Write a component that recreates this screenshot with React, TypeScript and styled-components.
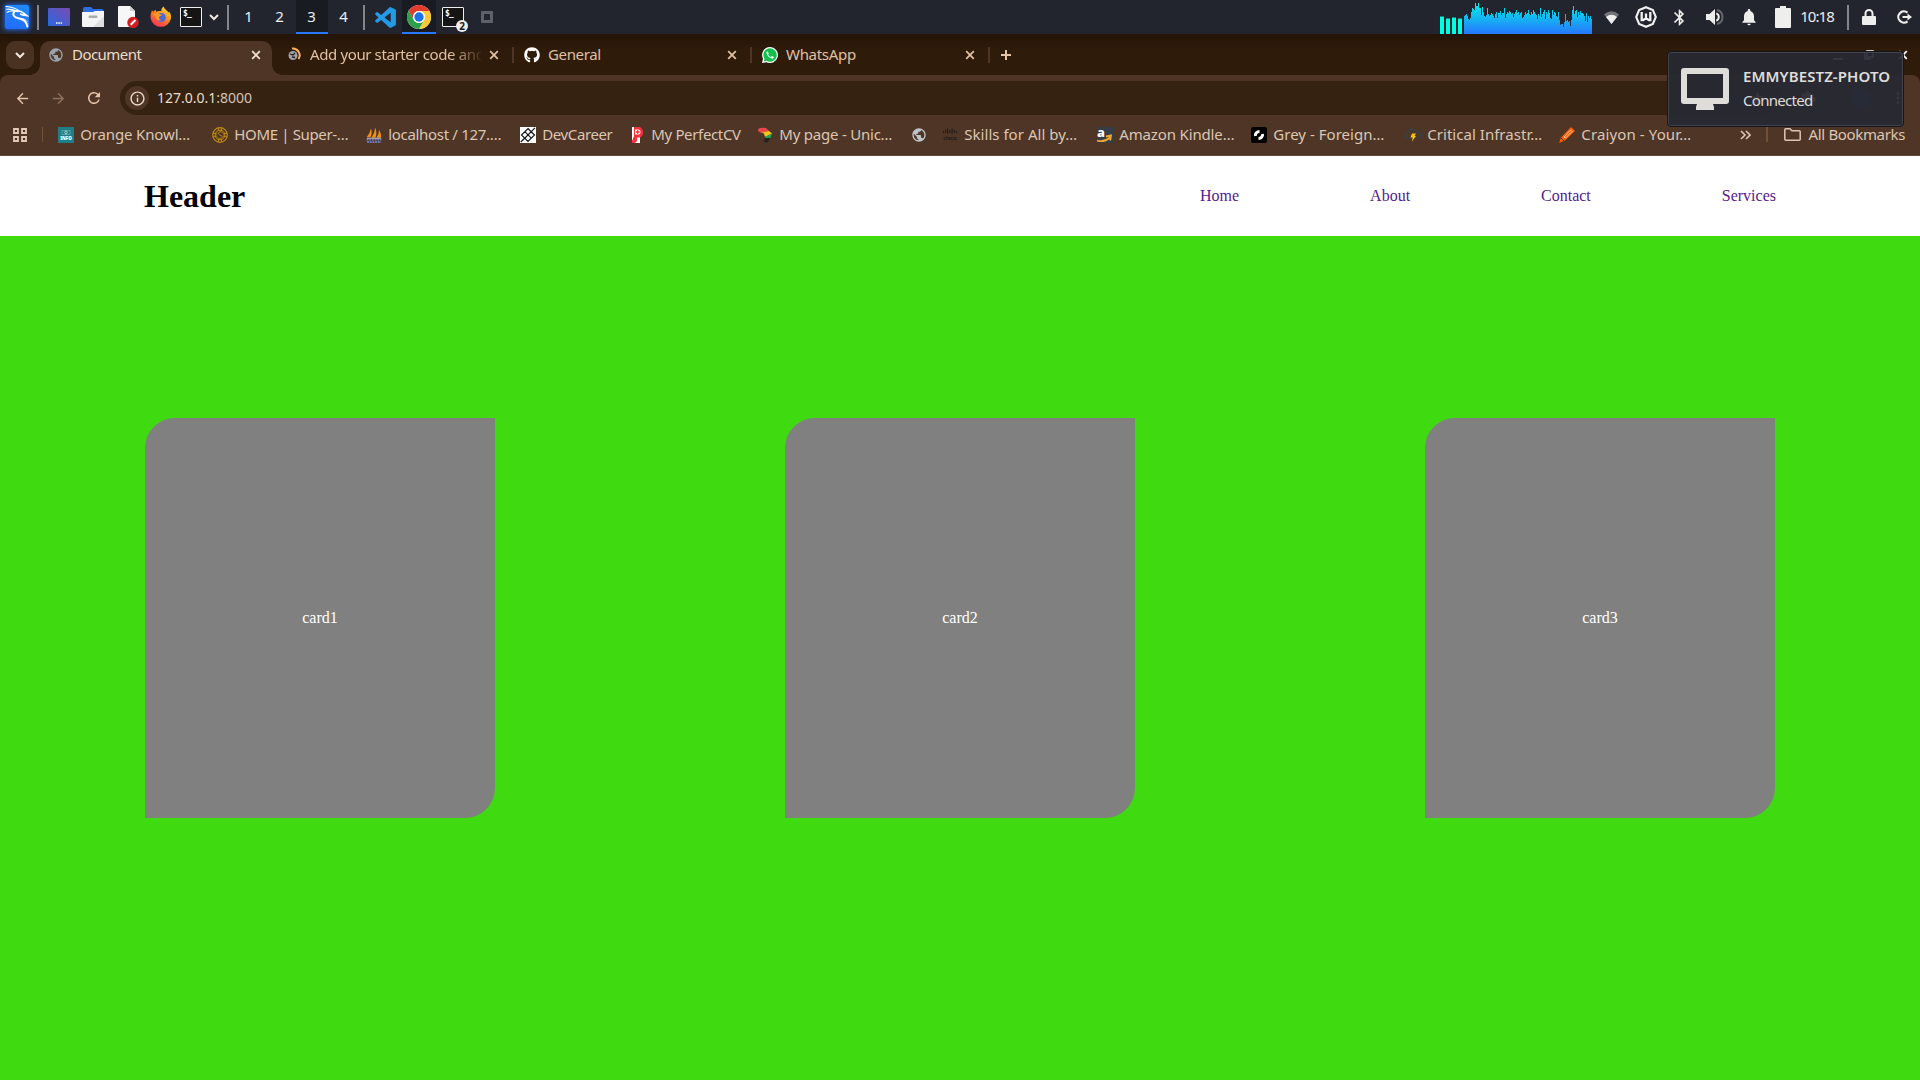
import React from "react";
import styled, { createGlobalStyle, css } from "styled-components";
import { FaGithub } from "react-icons/fa";
import { BiLogoVisualStudio } from "react-icons/bi";
import {
  MdArrowBack, MdArrowForward, MdRefresh, MdBluetooth, MdNotifications,
  MdExtension, MdStar, MdMoreVert, MdOutlineInfo, MdPublic,
} from "react-icons/md";

const ui = `"Noto Sans", "Open Sans", sans-serif`;
const serif = `"Liberation Serif", "Times New Roman", serif`;

const GlobalStyle = createGlobalStyle`
  html, body { margin: 0; padding: 0; }
  body { width: 1920px; height: 1080px; overflow: hidden; background: #40da10; }
  * { box-sizing: border-box; }
  svg { display: block; flex: none; }
`;

const Screen = styled.div`
  position: relative;
  display: flex;
  flex-direction: column;
  width: 1920px;
  height: 1080px;
  overflow: hidden;
`;

/* ---------- desktop panel ---------- */
const Panel = styled.header`
  display: flex;
  justify-content: space-between;
  height: 34px;
  flex: none;
  background: #23252e;
  font: 15px ${ui};
  color: #eeeeec;
`;
const PanelSide = styled.div`
  display: flex;
  align-items: center;
  height: 34px;
`;
const Slot = styled.div<{ $w: number; $active?: boolean }>`
  position: relative;
  display: flex;
  align-items: center;
  justify-content: center;
  flex: none;
  width: ${(p) => p.$w}px;
  height: 34px;
  line-height: 34px;
  ${(p) => p.$active && css`
    background: #191b22;
    box-shadow: inset 0 -2px #2777ff;
  `}
`;
const EndSlot = styled(Slot)`
  justify-content: flex-end;
  padding-right: 8px;
`;
const Workspace = styled.span`
  padding-right: 1px;
  line-height: 32px;
  height: 34px;
`;
const PanelRule = styled.span`
  width: 2px;
  height: 25px;
  background: #85868a;
`;
const KaliTile = styled.div`
  display: grid;
  place-items: center;
  width: 24px;
  height: 24px;
  border-radius: 2px;
  background: linear-gradient(20deg, #2369ff, #1f8dff);
  box-shadow: 0 0 4px 1px #2262d0;
`;
const Terminal = styled.div`
  width: 22px;
  height: 20px;
  border: 1px solid #eeeeec;
  border-radius: 1px;
  background: #151515;
  color: #fff;
  font: bold 8px/10px "DejaVu Sans Mono", monospace;
  letter-spacing: -0.8px;
  padding: 1px 2px;
`;
const CountBadge = styled.span`
  position: absolute;
  right: 2px;
  bottom: 2px;
  width: 12px;
  height: 12px;
  border-radius: 50%;
  background: #eeeeec;
  color: #191b22;
  font: bold 10px/12px ${ui};
  text-align: center;
`;
const TrayWindow = styled.span`
  width: 12px;
  height: 12px;
  border: 3px solid #5e606b;
  border-radius: 1px;
`;
const CpuBars = styled.div`
  display: flex;
  align-items: flex-end;
  gap: 2px;
  align-self: flex-end;
  margin-right: 2px;
`;
const CpuBar = styled.i<{ $h: number }>`
  width: 4px;
  height: ${(p) => p.$h}px;
  background: #00ffe0;
  box-shadow: 0 -1px #17847d;
`;
const Clock = styled.span`
  font-size: 15px;
  line-height: 32px;
  height: 34px;
  padding-right: 2px;
  letter-spacing: -0.95px;
  white-space: nowrap;
`;

/* ---------- browser chrome ---------- */
const TabStrip = styled.div`
  display: flex;
  height: 41px;
  flex: none;
  padding: 7px 0 0 6px;
  background: linear-gradient(#241407, #2e1b0a 16px);
  font: 15px ${ui};
`;
const TabSearch = styled.div`
  display: grid;
  place-items: center;
  width: 28px;
  height: 28px;
  border-radius: 9px;
  background: #4a3223;
`;
const Tab = styled.div<{ $active?: boolean }>`
  position: relative;
  display: flex;
  align-items: center;
  width: 238px;
  height: 34px;
  padding: 0 12px 6px 8px;
  color: ${(p) => (p.$active ? "#ecdccb" : "#e0c0a2")};
  ${(p) => p.$active && css`
    width: 232px;
    margin: 0 6px 0 6px;
    padding-right: 8px;
    border-radius: 10px 10px 0 0;
    background: #4e3526;
    &::before, &::after {
      content: "";
      position: absolute;
      bottom: 0;
      width: 10px;
      height: 10px;
    }
    &::before { left: -10px; background: radial-gradient(circle at 0 0, transparent 9.5px, #4e3526 10px); }
    &::after { right: -10px; background: radial-gradient(circle at 100% 0, transparent 9.5px, #4e3526 10px); }
  `}
`;
const TabLabel = styled.span<{ $track: number; $fade?: boolean }>`
  flex: 1;
  margin-left: 8px;
  margin-right: ${(p) => (p.$fade ? 5 : 7)}px;
  overflow: hidden;
  white-space: nowrap;
  line-height: 26px;
  padding-bottom: 2px;
  letter-spacing: ${(p) => p.$track}px;
  ${(p) => p.$fade && css`
    mask-image: linear-gradient(90deg, #000 82%, transparent 102%);
  `}
`;
const TabRule = styled.i`
  width: 2px;
  height: 16px;
  margin: 0 -10px 0 10px;
  background: #4e3526;
`;
const NewTab = styled.div`
  display: grid;
  place-items: center;
  width: 28px;
  height: 28px;
`;
const WindowButtons = styled.div`
  display: flex;
  align-items: center;
  gap: 21px;
  height: 28px;
  margin: 0 9px 0 auto;
`;

const ToolbarBack = styled.div`
  flex: none;
  background: #2e1b0a;
`;
const Toolbar = styled.div`
  display: flex;
  align-items: center;
  height: 46px;
  flex: none;
  background: #4e3526;
  border-radius: 8px 8px 0 0;
  color: #e6c4a8;
`;
const ToolButton = styled.div<{ $w: number; $dim?: boolean }>`
  display: grid;
  place-items: center;
  width: ${(p) => p.$w}px;
  opacity: ${(p) => (p.$dim ? 0.42 : 1)};
`;
const Omnibox = styled.div`
  display: flex;
  align-items: center;
  width: 1662px;
  height: 34px;
  margin-left: 4px;
  padding: 0 16px 0 5px;
  border-radius: 17px;
  background: #352210;
  color: #d5c4b5;
  font: 14px ${ui};
  > svg { margin-left: auto; }
`;
const SiteInfo = styled.span`
  display: grid;
  place-items: center;
  width: 24px;
  height: 24px;
  margin-right: 8px;
  border-radius: 50%;
  background: #4e3526;
  color: #ecdccb;
`;
const Address = styled.span`
  padding-bottom: 2px;
`;
const Host = styled.span`
  color: #ecdccb;
`;
const Avatar = styled.span`
  width: 20px;
  height: 20px;
  border-radius: 50%;
  background: #24466e;
`;

const Bookmarks = styled.nav`
  display: flex;
  align-items: center;
  height: 35px;
  flex: none;
  padding: 0 15px 7px 13px;
  background: #4e3526;
  border-bottom: 1px solid #5f4a3d;
  color: #dcc6b4;
  font: 15px ${ui};
`;
const BarRule = styled.i<{ $l: number; $r: number }>`
  width: 2px;
  height: 15px;
  margin: 0 ${(p) => p.$r}px 0 ${(p) => p.$l}px;
  background: #715039;
`;
const Bookmark = styled.a<{ $w: number }>`
  display: flex;
  align-items: center;
  gap: 6px;
  flex: none;
  width: ${(p) => p.$w}px;
`;
const BookmarkLabel = styled.span<{ $track: number }>`
  padding-bottom: 2px;
  white-space: nowrap;
  line-height: 20px;
  letter-spacing: ${(p) => p.$track}px;
`;
const Overflow = styled.span`
  margin-left: 27px;
`;
const AllBookmarks = styled.span`
  display: flex;
  align-items: center;
  gap: 8px;
`;

/* ---------- web page ---------- */
const PageHeader = styled.div`
  display: flex;
  align-items: center;
  justify-content: space-between;
  height: 80px;
  flex: none;
  padding: 0 144px;
  background: #fff;
  font: 16px ${serif};
`;
const Title = styled.h1`
  margin: 0;
  font-size: 32px;
  color: #000;
`;
const Menu = styled.nav`
  display: flex;
  justify-content: space-between;
  width: 576px;
`;
const MenuLink = styled.a`
  color: #551a8b;
`;
const Cards = styled.main`
  display: flex;
  flex: 1;
  justify-content: space-between;
  align-items: flex-start;
  padding: 182px 145px 0;
  background: #40da10;
`;
const Card = styled.section`
  display: flex;
  align-items: center;
  justify-content: center;
  width: 350px;
  height: 400px;
  border-radius: 30px 0;
  background: #808080;
  color: #fff;
  font: 16px ${serif};
`;

/* ---------- notification ---------- */
const Toast = styled.aside`
  position: absolute;
  top: 51px;
  left: 1667px;
  display: flex;
  align-items: center;
  gap: 14px;
  width: 237px;
  height: 76px;
  padding-left: 13px;
  border: 1px solid #15161c;
  border-radius: 4px;
  box-shadow: inset 0 0 0 1px #41434d;
  background: rgba(39, 41, 51, 0.93);
  color: #deddda;
  font: 15px/24px ${ui};
  white-space: nowrap;
`;
const ToastText = styled.div`
  padding-bottom: 2px;
`;
const ToastTitle = styled.div`
  font-weight: 600;
  letter-spacing: 0.1px;
`;
const ToastBody = styled.div`
  letter-spacing: -0.7px;
`;

const Cross = ({ color = "#e0c0a2" }) => (
  <svg width="16" height="16" viewBox="0 0 16 16" stroke={color} strokeWidth="1.8">
    <path d="M4.2 4.2l7.6 7.6M11.8 4.2l-7.6 7.6" />
  </svg>
);
const Chevron = ({ w = 10 }) => (
  <svg width={w} height={w} viewBox="0 0 10 10" fill="none" stroke="#f0e8e0" strokeWidth="2">
    <path d="M1 3l4 4 4-4" />
  </svg>
);
const KaliDragon = () => (
  <svg width="24" height="24" viewBox="0 0 24 24" fill="none" stroke="#fff" strokeLinecap="round">
    <path d="M1 1.500C6 1.700 11 3.200 15 6.500M1.500 4.200C6 3.800 10 5 13 6.700M2 7.300C5 5.800 7 5.800 9.500 6.300" strokeWidth="1.100" />
    <path d="M9.500 6.300C13 5.600 16.500 6.300 19 8.300L21.800 10.600 17.500 9.900 15.500 9" strokeWidth="1.600" />
    <path d="M9.500 6.300C6.800 9.500 9 12.600 13.500 13.200C18.500 14 21.500 16.300 22.400 21.500" strokeWidth="1.900" />
    <path d="M14.500 13.500C18.500 13.300 20.500 14.500 22 16.500" strokeWidth="1" />
  </svg>
);
const ChromeLogo = () => (
  <svg width="24" height="24" viewBox="0 0 48 48">
    <circle cx="24" cy="24" r="24" fill="#fff" />
    <path d="M3.2 12A24 24 0 0 1 44.8 12H24A12 12 0 0 0 13.6 30z" fill="#e33b2e" />
    <path d="M44.8 12A24 24 0 0 1 24 48L34.4 30A12 12 0 0 0 24 12z" fill="#fcc934" />
    <path d="M24 48A24 24 0 0 1 3.2 12L13.6 30A12 12 0 0 0 34.4 30z" fill="#2da04b" />
    <circle cx="24" cy="24" r="12" fill="#fff" />
    <circle cx="24" cy="24" r="9.3" fill="#1a73e8" />
  </svg>
);
const Firefox = () => (
  <svg width="22" height="22" viewBox="0 0 22 22">
    <defs>
      <linearGradient id="fox" x1=".8" y1="0" x2=".2" y2="1">
        <stop offset="0" stopColor="#ffe22e" /><stop offset=".45" stopColor="#ff8a20" /><stop offset="1" stopColor="#f5265f" />
      </linearGradient>
    </defs>
    <path d="M2 4.5l1.5 1.3 2-2.3.6 2.2c2-.8 4-.8 5.2-.5C11 3 12.500 1.200 13.800.5c.2 2.500 3.700 4 4.700 6l.6-1c2 2.500 2.300 5 1.700 7.500A10.300 10.300 0 0 1 .8 13C.2 10 .8 7 2 4.500z" fill="url(#fox)" />
    <circle cx="11.200" cy="11.500" r="4.600" fill="#4a66d8" />
    <path d="M3.500 8c2-1.500 5-1 6 .2l2.500.3c-.5 1.500-2.500 1.500-3 2.500-.2 2 1 3 2.500 3-3 1.500-6-.5-6-3.500z" fill="#ff9a22" />
  </svg>
);
const Desktop = () => (
  <svg width="22" height="18" viewBox="0 0 22 18">
    <defs><linearGradient id="dsk" x1="0" y1="1" x2="1" y2="0"><stop offset=".1" stopColor="#2f66dc" /><stop offset="1" stopColor="#7b4bb0" /></linearGradient></defs>
    <rect width="22" height="18" rx="1" fill="url(#dsk)" />
    <path d="M8 15h1.500M10.300 15h1.500M12.600 15h1.500" stroke="#fff" strokeWidth="1.500" />
  </svg>
);
const Files = () => (
  <svg width="22" height="20" viewBox="0 0 22 20">
    <path d="M1 1.500Q1 0 2.500 0H9l2 2h9q1.500 0 1.500 1.500V8H1z" fill="#2d6de0" />
    <path d="M0 5h11l2-1h9v15q0 1-1 1H1q-1 0-1-1z" fill="#f4f4f4" />
    <path d="M22 9v10q0 1-1 1H11z" fill="#dedede" />
    <rect x="6.500" y="8.500" width="9" height="2.400" rx="1.200" fill="#aaa" />
  </svg>
);
const Editor = () => (
  <svg width="21" height="22" viewBox="0 0 21 22">
    <path d="M1 0h11l5 5v16H1q-1 0-1-1V1q0-1 1-1z" fill="#f7f7f7" />
    <path d="M12 0l5 5h-5z" fill="#cfcfcf" />
    <circle cx="15" cy="16.500" r="5.700" fill="#d01e22" />
    <path d="M12.700 18.800l4.800-4.800" stroke="#fff" strokeWidth="2" />
  </svg>
);
const Wifi = () => (
  <svg width="15" height="13" viewBox="0 0 15 13">
    <path d="M0 3.500Q7.500-3 15 3.500L7.500 13z" fill="#73747a" />
    <path d="M2 6Q7.500 1.500 13 6L7.500 13z" fill="#eeeeec" />
  </svg>
);
const WBadge = () => (
  <svg width="22" height="22" viewBox="0 0 22 22" fill="none" stroke="#f2f2f2">
    <path d="M11 1.200l6.900 2.900 2.900 6.900-2.900 6.900L11 20.800l-6.900-2.900L1.200 11l2.900-6.900z" strokeWidth="2.100" />
    <path d="M6.700 6v8.200h1.500L11 12l2.800 2.200h1.500V6M11 7.500V12" strokeWidth="2.300" />
  </svg>
);
const Volume = () => (
  <svg width="18" height="16" viewBox="0 0 18 16" fill="none">
    <path d="M0 5h3.500L9 0v16l-5.500-5H0z" fill="#eeeeec" />
    <path d="M10.300 4.300a4 4 0 0 1 0 7.400" stroke="#eeeeec" strokeWidth="2" />
    <path d="M11 1a7.200 7.200 0 0 1 0 14" stroke="#66676e" strokeWidth="2" />
  </svg>
);
const Battery = () => (
  <svg width="16" height="22" viewBox="0 0 16 22" fill="#eeeeec">
    <path d="M5 0h6v2h4q1 0 1 1v18q0 1-1 1H1q-1 0-1-1V3q0-1 1-1h4z" />
  </svg>
);
const Lock = () => (
  <svg width="14" height="16" viewBox="0 0 14 16">
    <path d="M3.500 8V4.500a3.500 3.500 0 0 1 7 0V8" fill="none" stroke="#eeeeec" strokeWidth="2" />
    <rect y="7" width="14" height="9" rx="1" fill="#eeeeec" />
  </svg>
);
const Logout = () => (
  <svg width="15" height="14" viewBox="0 0 15 14" fill="none" stroke="#eeeeec" strokeWidth="2.200">
    <path d="M10.500 2.700A5.600 5.600 0 1 0 10.500 11.300M5.500 7h7" />
    <path d="M10.500 3.500L15 7l-4.500 3.500z" fill="#eeeeec" stroke="none" />
  </svg>
);
const Monitor = () => (
  <svg width="48" height="42" viewBox="0 0 48 42" fill="#deddda">
    <path fillRule="evenodd" d="M3 0h42q3 0 3 3v30q0 3-3 3H32l1 3v3H15v-3l1-3H3q-3 0-3-3V3q0-3 3-3zM6 6v24h36V6z" />
  </svg>
);
const Folder = () => (
  <svg width="17" height="13" viewBox="0 0 17 13" fill="none" stroke="#dcc6b4" strokeWidth="1.500">
    <path d="M.8 1.800q0-1 1-1H6l1.800 1.900h7.400q1 0 1 1v7.500q0 1-1 1H1.800q-1 0-1-1z" />
  </svg>
);

const graph = [
  18, 19, 20, 18, 15, 14, 16, 22, 26, 25, 24, 31, 28, 28, 31, 26, 26, 19, 27, 22, 18, 17, 19, 26, 20, 18, 19, 21,
  20, 18, 16, 20, 22, 16, 21, 21, 23, 19, 21, 21, 26, 16, 20, 22, 21, 23, 22, 20, 21, 17, 20, 22, 24, 21, 22, 19,
  21, 22, 16, 17, 19, 22, 20, 21, 24, 20, 19, 22, 20, 24, 22, 20, 19, 15, 20, 18, 26, 17, 20, 22, 24, 15, 22,
  20, 24, 21, 16, 15, 24, 19, 22, 21, 18, 17, 22, 14, 9, 10, 10, 7, 12, 20, 13, 14, 12, 13, 8, 14, 24, 28, 20, 23,
  24, 17, 22, 19, 23, 21, 21, 20, 18, 13, 21, 12, 18, 16, 18, 15,
];
const NetGraph = () => (
  <svg width="128" height="34" viewBox="0 0 128 34" shapeRendering="crispEdges">
    <defs><linearGradient id="net" gradientUnits="userSpaceOnUse" x1="0" y1="2" x2="0" y2="34"><stop offset="0" stopColor="#00f4e4" /><stop offset="1" stopColor="#2777ff" /></linearGradient></defs>
    <path fill="url(#net)" d={graph.map((h, i) => `M${i} 34v${-h}h1v${h}z`).join("")} />
  </svg>
);

const Favicon = ({ kind }: { kind: string }) => {
  if (kind === "globe") return <MdPublic size={16} color="#bfc4cb" />;
  return (
    <svg width="16" height="16" viewBox="0 0 16 16" fill="none">
      {kind === "info" && <><path fill="#217d86" d="M0 0h16v16H0z" /><path d="M4 3.500h8v4H4z" stroke="#5fa9ad" strokeWidth=".8" /><circle cx="8" cy="5.500" r="1.300" stroke="#d6f1f0" strokeWidth=".7" /><text x="8" y="13" textAnchor="middle" fontFamily="Noto Sans" fontWeight="900" fontSize="4.500" fill="#fff">INFO</text></>}
      {kind === "seal" && <g stroke="#be8b0c"><circle cx="8" cy="8" r="7.300" strokeWidth="1.200" /><circle cx="8" cy="8" r="4.800" /><path d="M10.500 5.500C8 3.500 5 6 7 7.500s4 1 3 3-4 1-4.500 0M1 6l4 1M1 10l4-1M15 6l-4 1M15 10l-4-1M6 1l1 3M10 1L9 4M6 15l1-3M10 15l-1-3" /></g>}
      {kind === "boat" && <><path d="M5 1.500Q6.500 6 4.500 10H.8Q4 6.500 5 1.500zM9.300.5Q11.300 6 9.500 10.500H5.500Q8.800 6 9.300.5zM13 2.500Q15.500 7 15 10.500H10.500Q13.300 7 13 2.500z" fill="#f29111" /><path d="M.5 12.500h15M1 15h14" stroke="#6c78af" strokeWidth="2" strokeDasharray="2 .7" /><path d="M1 11.200h14" stroke="#e8e4e8" strokeWidth=".8" /></>}
      {kind === "dev" && <><path fill="#fff" d="M0 0h16v16H0z" /><path d="M8 1.500L14.500 8 8 14.500 1.500 8zM5 11l6.200-6.300M5 4.800l6.300 6.300M15 .8L11.500 4.300M.8 15l3.500-3.500" stroke="#15171a" strokeWidth="1.200" /></>}
      {kind === "cv" && <><path fill="#fff" d="M3 0h8v16H3z" /><path d="M4.500 0H11q3 2 3 5.500T11 10.500H8V14l-2 2H3V14L5 9V0z" fill="#f2333b" /><path d="M6 2.500h3.500q2 0 2 2.500T9.500 7.500H6z" fill="#fff" /><path d="M8.700 3.200v3.600M6.900 5H10.500" stroke="#f2333b" strokeWidth="1.400" /></>}
      {kind === "africa" && <><path d="M1 2Q4 0 9 1l3 3-8 2-3-2z" fill="#e8484a" /><path d="M4 5.800L12 4l3 2.500L8 10l-1-3.500z" fill="#f6c51b" /><path d="M8 9.800L15 6.800l-1.500 4-4 1z" fill="#1ea65a" /><path d="M7.500 11.500l5-.8v2L9.500 16 7 14.500z" fill="#25221d" /></>}
      {kind === "cisco" && <><path d="M1.500 4v2M3.600 2.500V6M5.700 1.500V7M7.900 3v3M10.100 1.500V7M12.300 2.500V6M14.500 4v2" stroke="#201b17" /><text x="8" y="12.800" textAnchor="middle" fontFamily="Noto Sans" fontWeight="700" fontSize="5.500" fill="#201b17">cisco</text></>}
      {kind === "kindle" && <><path fill="#333e48" d="M0 0h16v16H0z" /><text x="0" y="9.500" fontFamily="Noto Sans" fontWeight="800" fontSize="13" fill="#fff">a</text><path d="M0 13.500c5 1.600 9 .5 13-3M9 9.500l5-1-.8 5" stroke="#f5a52b" strokeWidth="1.800" /></>}
      {kind === "grey" && <><rect width="16" height="16" rx="2" fill="#000" /><path d="M8.500 4.500C6 4.500 4 6.500 4.500 9M7.500 11.500c2.500 0 4.500-2 4-4.500" stroke="#fff" strokeWidth="3" /></>}
      {kind === "cloud" && <><path d="M6 11H4C1 11 0 8.500 1 7l2-1c0-3 2-4 4-4s4 1 4.500 3c3 0 4.500 1.500 4 4q-.5 2-3 2H11" stroke="#2e4653" strokeWidth="1.200" /><path d="M7 6.500h4L9.500 9H11l-4 5.500.7-4H5.500z" fill="#fcc309" /></>}
      {kind === "crayon" && <><path d="M0 16l2-5.500L12 0l4 4L6 13.500z" fill="#f4600c" /><path d="M5 10l6.500-7L13 4.500 6.500 11z" stroke="#ffc08a" /><path d="M2 11l3 3" stroke="#4e3526" /></>}
    </svg>
  );
};

const bookmarks: [string, string, number, number][] = [
  ["info", "Orange Knowl…", 154, -0.15],
  ["seal", "HOME | Super-…", 154, -0.35],
  ["boat", "localhost / 127.…", 154, -0.32],
  ["dev", "DevCareer", 109, -0.4],
  ["cv", "My PerfectCV", 128, -0.35],
  ["africa", "My page - Unic…", 154, -0.22],
  ["globe", "", 31, 0],
  ["cisco", "Skills for All by…", 155, 0.03],
  ["kindle", "Amazon Kindle…", 154, -0.15],
  ["grey", "Grey - Foreign…", 154, 0.03],
  ["cloud", "Critical Infrastr…", 154, 0.03],
  ["crayon", "Craiyon - Your…", 154, 0.12],
];

export default function App() {
  return (
    <Screen>
      <GlobalStyle />
      <Panel>
        <PanelSide>
          <Slot $w={34}><KaliTile><KaliDragon /></KaliTile></Slot>
          <Slot $w={8}><PanelRule /></Slot>
          <Slot $w={34}><Desktop /></Slot>
          <Slot $w={34}><Files /></Slot>
          <Slot $w={36}><Editor /></Slot>
          <Slot $w={30}><Firefox /></Slot>
          <Slot $w={30}><Terminal>$_</Terminal></Slot>
          <Slot $w={16}><Chevron /></Slot>
          <Slot $w={12}><PanelRule /></Slot>
          <Slot $w={30}><Workspace>1</Workspace></Slot>
          <Slot $w={32}><Workspace>2</Workspace></Slot>
          <Slot $w={32} $active><Workspace>3</Workspace></Slot>
          <Slot $w={32}><Workspace>4</Workspace></Slot>
          <Slot $w={8}><PanelRule /></Slot>
          <Slot $w={34}><BiLogoVisualStudio size={25} color="#249ae6" /></Slot>
          <Slot $w={34} $active><ChromeLogo /></Slot>
          <Slot $w={34}><Terminal>$_</Terminal><CountBadge>2</CountBadge></Slot>
          <Slot $w={34}><TrayWindow /></Slot>
        </PanelSide>
        <PanelSide>
          <CpuBars><CpuBar $h={17} /><CpuBar $h={15} /><CpuBar $h={16} /><CpuBar $h={15} /></CpuBars>
          <NetGraph />
          <Slot $w={38}><Wifi /></Slot>
          <Slot $w={32}><WBadge /></Slot>
          <Slot $w={34}><MdBluetooth size={19} /></Slot>
          <Slot $w={37}><Volume /></Slot>
          <Slot $w={32}><MdNotifications size={20} /></Slot>
          <Slot $w={36}><Battery /></Slot>
          <Slot $w={34}><Clock>10:18</Clock></Slot>
          <Slot $w={26}><PanelRule /></Slot>
          <Slot $w={16}><Lock /></Slot>
          <EndSlot $w={43}><Logout /></EndSlot>
        </PanelSide>
      </Panel>

      <TabStrip>
        <TabSearch><Chevron /></TabSearch>
        <Tab $active>
          <MdPublic size={16} color="#9aa3ae" />
          <TabLabel $track={-0.55}>Document</TabLabel>
          <Cross color="#f3e4d6" />
        </Tab>
        <Tab>
          <svg width="16" height="16" viewBox="0 0 16 16" fill="none">
            <circle cx="7" cy="8.500" r="4.500" fill="#9aa3ae" />
            <path d="M4 7l3 1 2-2M6 10l3 .5" stroke="#2e1b0a" strokeWidth="1.300" />
            <path d="M6 1.500A6.800 6.800 0 0 1 12.500 12" stroke="#ffad62" strokeWidth="2" />
          </svg>
          <TabLabel $track={-0.38} $fade>Add your starter code and</TabLabel>
          <Cross />
          <TabRule />
        </Tab>
        <Tab>
          <FaGithub size={16} color="#fff" />
          <TabLabel $track={-0.35}>General</TabLabel>
          <Cross />
          <TabRule />
        </Tab>
        <Tab>
          <svg width="16" height="16" viewBox="0 0 16 16">
            <path d="M8 0a8 8 0 1 1-3.500 15.200L0 16l1-4.200A8 8 0 0 1 8 0z" fill="#fff" />
            <path d="M8 1.300a6.700 6.700 0 1 1-3.300 12.500l-2.900.7.700-2.800A6.700 6.700 0 0 1 8 1.300z" fill="#10c14c" />
            <path d="M5.500 4.200c-1 .6-1.200 1.500-.8 2.500 1 2.500 2.500 4 5 4.900 1.200.3 2-.4 2.200-1.500l-2-1-1 1C7.700 9.700 6.600 8.500 6.100 7.400l.7-1z" fill="#fff" />
          </svg>
          <TabLabel $track={-0.3}>WhatsApp</TabLabel>
          <Cross />
          <TabRule />
        </Tab>
        <NewTab>
          <svg width="12" height="12" viewBox="0 0 12 12" stroke="#e6c4a8" strokeWidth="2"><path d="M6 1v10M1 6h10" /></svg>
        </NewTab>
        <WindowButtons>
          <svg width="10" height="10" viewBox="0 0 10 10" stroke="#fff" strokeWidth="2"><path d="M0 9h10" /></svg>
          <svg width="10" height="10" viewBox="0 0 10 10" fill="none" stroke="#fff" strokeWidth="1.500"><path d="M3 1h6v6H3zM1 3v6h6" /></svg>
          <Cross color="#fff" />
        </WindowButtons>
      </TabStrip>

      <ToolbarBack>
        <Toolbar>
          <ToolButton $w={44}><MdArrowBack size={17} /></ToolButton>
          <ToolButton $w={28} $dim><MdArrowForward size={17} /></ToolButton>
          <ToolButton $w={44}><MdRefresh size={18} /></ToolButton>
          <Omnibox>
            <SiteInfo><MdOutlineInfo size={17} /></SiteInfo>
            <Address><Host>127.0.0.1</Host>:8000</Address>
            <MdStar size={17} color="#f3c29a" />
          </Omnibox>
          <ToolButton $w={52}><MdExtension size={17} /></ToolButton>
          <ToolButton $w={54}><Avatar /></ToolButton>
          <ToolButton $w={20}><MdMoreVert size={18} /></ToolButton>
        </Toolbar>
      </ToolbarBack>
      <Bookmarks>
        <svg width="14" height="14" viewBox="0 0 14 14" fill="none" stroke="#e2ccb9" strokeWidth="1.800">
          <path d="M1 1h4v4H1zM9 1h4v4H9zM1 9h4v4H1zM9 9h4v4H9z" />
        </svg>
        <BarRule $l={15} $r={15} />
        {bookmarks.map(([kind, label, w, track]) => (
          <Bookmark key={kind} $w={w}>
            <Favicon kind={kind} />
            {label && <BookmarkLabel $track={track}>{label}</BookmarkLabel>}
          </Bookmark>
        ))}
        <Overflow>
          <svg width="11" height="10" viewBox="0 0 11 10" fill="none" stroke="#dcc6b4" strokeWidth="1.600"><path d="M1 1l4 4-4 4M6 1l4 4-4 4" /></svg>
        </Overflow>
        <BarRule $l={15} $r={16} />
        <AllBookmarks><Folder /><BookmarkLabel $track={-0.35}>All Bookmarks</BookmarkLabel></AllBookmarks>
      </Bookmarks>

      <PageHeader>
        <Title>Header</Title>
        <Menu>
          <MenuLink>Home</MenuLink>
          <MenuLink>About</MenuLink>
          <MenuLink>Contact</MenuLink>
          <MenuLink>Services</MenuLink>
        </Menu>
      </PageHeader>
      <Cards>
        <Card>card1</Card>
        <Card>card2</Card>
        <Card>card3</Card>
      </Cards>

      <Toast>
        <Monitor />
        <ToastText>
          <ToastTitle>EMMYBESTZ-PHOTO</ToastTitle>
          <ToastBody>Connected</ToastBody>
        </ToastText>
      </Toast>
    </Screen>
  );
}
